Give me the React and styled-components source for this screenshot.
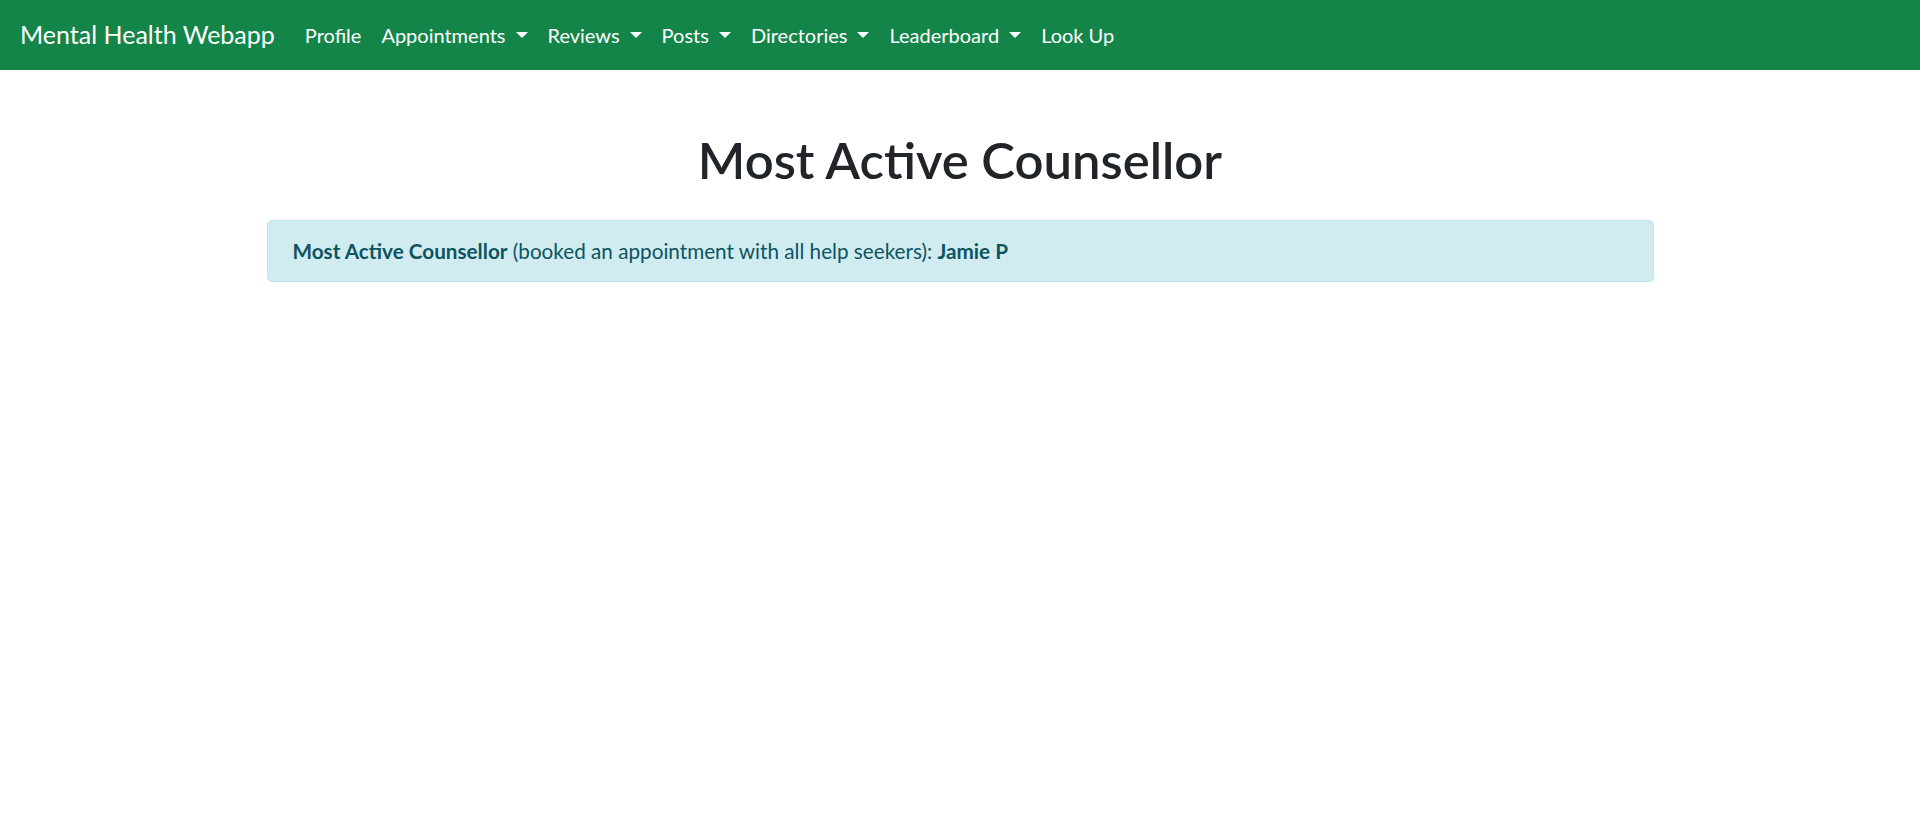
import React from 'react'
import styled, { createGlobalStyle } from "styled-components";

const GlobalStyle = createGlobalStyle`
  * { box-sizing: border-box; }
  body {
    margin: 0;
    font-family: "Segoe UI", "Lato", "Open Sans", sans-serif;
    font-size: 20px;
    line-height: 1.5;
    color: #212529;
    background: #fff;
  }
`;

const navItems = [
    { label: "Profile" },
    { label: "Appointments", dropdown: true },
    { label: "Reviews", dropdown: true },
    { label: "Posts", dropdown: true },
    { label: "Directories", dropdown: true },
    { label: "Leaderboard", dropdown: true },
    { label: "Look Up" },
]

const App = () => {
    return (
        <>
            <GlobalStyle />
            <Navbar>
                <Brand href='#'>Mental Health Webapp</Brand>
                <NavList>
                    {navItems.map(item => (
                        <NavLink key={item.label} href='#' caret={item.dropdown}>
                            {item.label}
                        </NavLink>
                    ))}
                </NavList>
            </Navbar>
            <Container>
                <Title>Most Active Counsellor</Title>
                <Alert>
                    <strong>Most Active Counsellor</strong> (booked an appointment with all help seekers): <strong>Jamie P</strong>
                </Alert>
            </Container>
        </>
    )
}

const Navbar = styled.nav`
display:flex;
align-items:center;
height:70px;
padding:10px 20px;
background:#148548;
`;

const Brand = styled.a`
font-size:25px;
line-height:37.5px;
padding:6.25px 0;
margin-right:20px;
color:#fff;
text-decoration:none;
white-space:nowrap;
`;

const NavList = styled.div`
display:flex;
align-items:center;
`;

const NavLink = styled.a`
display:block;
padding:10px;
color:#fff;
text-decoration:none;
white-space:nowrap;
${props => props.caret && `
  &::after {
    content:"";
    display:inline-block;
    margin-left:.5em;
    vertical-align:.255em;
    border-top:.3em solid;
    border-right:.3em solid transparent;
    border-left:.3em solid transparent;
    border-bottom:0;
  }
`}
`;

const Container = styled.div`
width:1387px;
margin:0 auto;
`;

const Title = styled.h1`
margin:60px 0 30px;
font-size:50.8px;
font-weight:600;
line-height:60px;
text-align:center;
color:#212529;
`;

const Alert = styled.div`
padding:15px 25px;
border:1.25px solid #bee5eb;
border-radius:5px;
background:#d1ecf1;
color:#0c5460;
font-size:20.7px;
line-height:30px;
strong {
    font-weight:700;
}
`;

export default App;
